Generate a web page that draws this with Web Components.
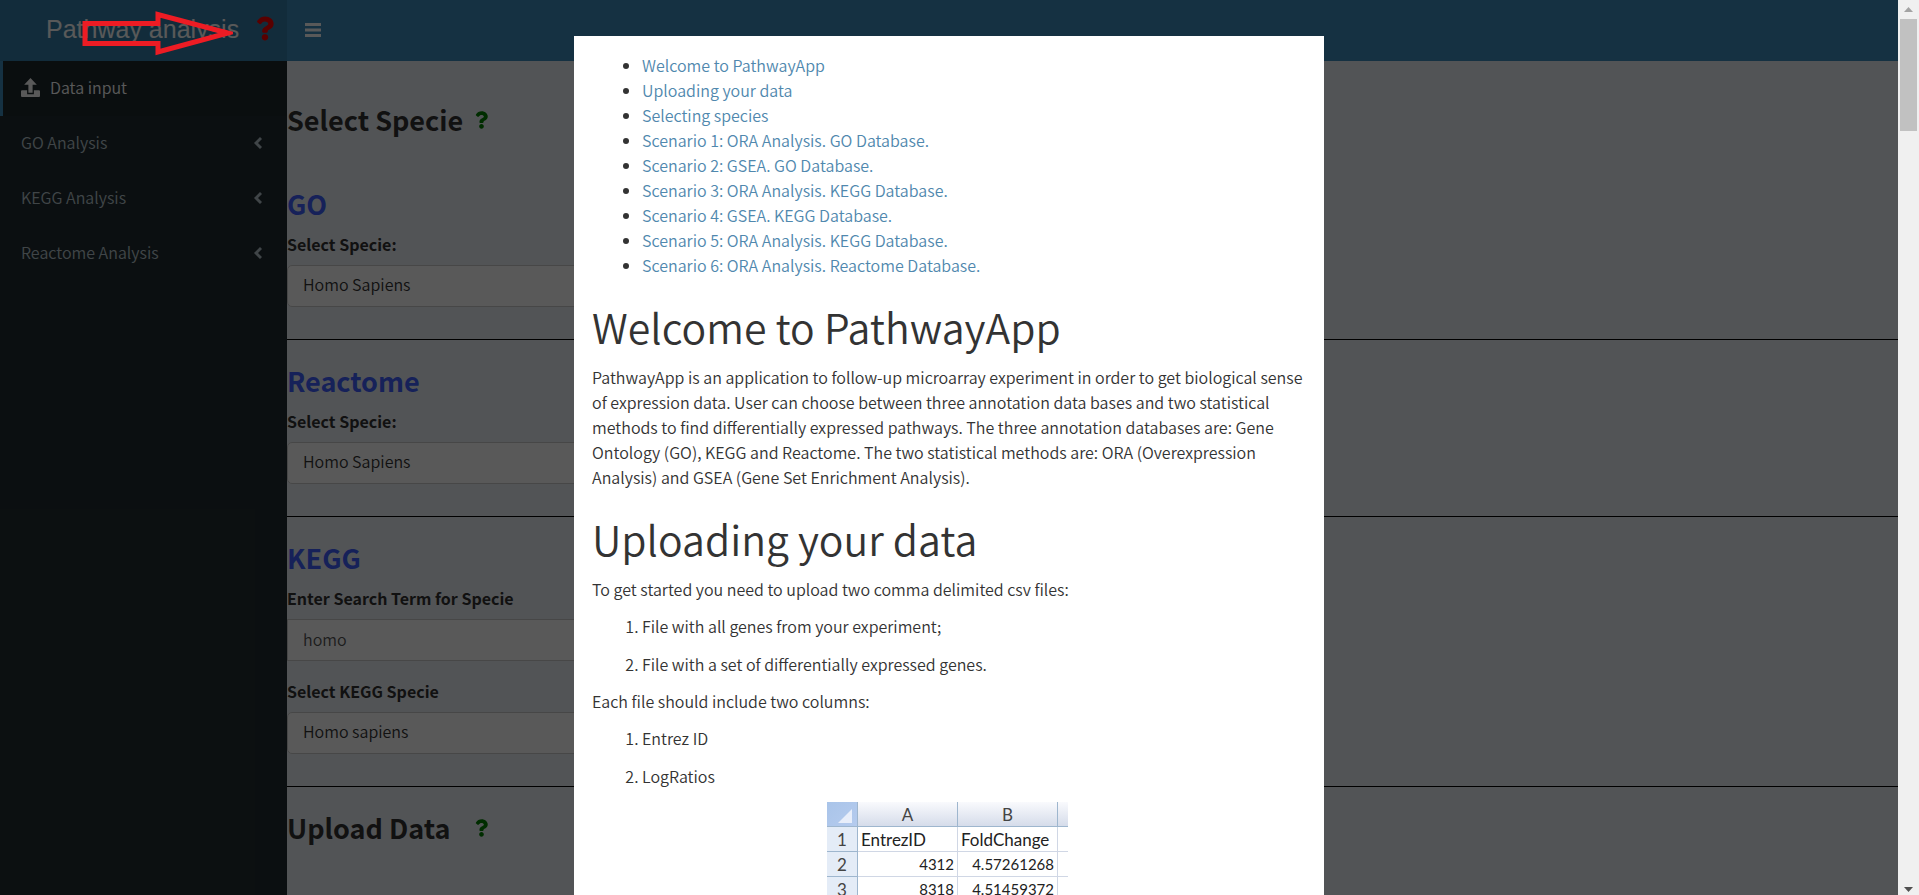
<!DOCTYPE html>
<html lang="en">
<head>
<meta charset="utf-8">
<title>Pathway analysis</title>
<style>
html, body { margin: 0; height: 100%; overflow: hidden; }
body { font: 350 16px/25px "Noto Sans CJK SC", "Noto Sans", sans-serif; color: #333; }
</style>
</head>
<body>
<pathway-app></pathway-app>

<script>
const define = (name, html, setup) => customElements.define(name, class extends HTMLElement {
  connectedCallback() {
    if (this.shadowRoot) return;
    this.attachShadow({ mode: "open" }).innerHTML = html;
    if (setup) setup(this, this.shadowRoot);
  }
});

const shapes = {
  question: ["0 0 384 512", "M202 0C122.500 0 69.600 32.800 28.100 91.300c-8 11.300-5.600 26.800 5.200 35l43.100 32.700c10.600 8 25.700 6 33.900-4.300 25-31.600 43.600-49.700 82.700-49.700 30.800 0 68.800 19.800 68.800 49.600 0 22.600-18.600 34.200-49 51.200-35.400 19.900-82.300 44.600-82.300 106.500V320c0 13.300 10.700 24 24 24h72.500c13.300 0 24-10.700 24-24v-5.800c0-42.900 125.400-44.700 125.400-160.800C377 66 286.800 0 202 0zM192 373.500c-38.200 0-69.300 31.100-69.300 69.300S153.800 512 192 512s69.300-31 69.300-69.300-31.100-69.200-69.300-69.200z"],
  bars: ["0 0 16 14", "M0 0h16v3H0zM0 5.500h16v3H0zM0 11h16v3H0z"],
  left: ["0 0 8 12", "M6 0 8 2 4 6l4 4-2 2L0 6z"],
  upload: ["0 0 18 18", "M9 0l6 6.500h-4V14H7V6.500H3zM1 11.500h4.800v3.800h6.400v-3.800H17q1 0 1 1v4.500q0 1-1 1H1q-1 0-1-1v-4.500q0-1 1-1z"]
};
define("app-icon", `<style>:host{display:block;flex:none}svg{display:block;width:100%;height:100%;fill:currentColor}</style><svg aria-hidden="true"><path/></svg>`, (el, root) => {
  const [box, d] = shapes[el.getAttribute("name")];
  root.querySelector("svg").setAttribute("viewBox", box);
  root.querySelector("path").setAttribute("d", d);
});

define("app-header", `<style>
:host{display:flex;height:61px;background:#3c8dbc;color:#fff}
.brand{box-sizing:border-box;width:287px;display:flex;align-items:center;justify-content:space-between;padding:0 13px 4px 46px;background:#367fa9;color:#fff;font:25px/30px "Liberation Sans",Arial,sans-serif;text-decoration:none}
.brand app-icon{width:18px;height:25px;color:#f00}
button{border:0;background:none;color:inherit;padding:0 18px 2px}
button app-icon{width:16px;height:14px}
</style><a class="brand" href="#help">Pathway analysis<app-icon name="question"></app-icon></a><button aria-label="Toggle navigation"><app-icon name="bars"></app-icon></button>`);

define("nav-item", `<style>
:host{display:block}
a{display:flex;align-items:center;gap:10px;height:55px;box-sizing:border-box;padding:0 25px 2px 18px;border-left:3px solid transparent;color:#b8c7ce;text-decoration:none}
:host([active]) a{background:#1e282c;border-color:#3c8dbc;color:#fff}
.up{width:19px;height:19px}.more{width:8px;height:12px;margin-left:auto}
:host([active]) .more,:host(:not([active])) .up{display:none}
</style><a href="#"><app-icon class="up" name="upload"></app-icon><slot></slot><app-icon class="more" name="left"></app-icon></a>`);

define("app-sidebar", `<style>:host{display:block;width:287px;flex:none;background:#222d32}</style>
<nav><nav-item active>Data input</nav-item><nav-item>GO Analysis</nav-item><nav-item>KEGG Analysis</nav-item><nav-item>Reactome Analysis</nav-item></nav>`);

define("section-title", `<style>
:host{display:block}
h2{margin:0;display:flex;align-items:center;justify-content:space-between;width:201px;font-size:27px;line-height:33px;font-weight:700;color:#333;white-space:nowrap}
:host([blue]) h2{color:#4060ff}
app-icon{width:13px;height:18px;color:#008000}
:host([blue]) app-icon{display:none}
</style><h2><slot></slot><app-icon name="question"></app-icon></h2>`);

define("form-field", `<style>
:host{display:block;width:375px;max-width:100%}
label{display:block;margin-bottom:8px;font-weight:700;color:#333}
select,input{display:block;box-sizing:border-box;width:100%;height:42px;padding:0 15px 3px;border:1px solid #ccc;border-radius:5px;background:#fff;color:#333;font:inherit;appearance:none}
input{border-radius:0;color:#555}
</style><label for="control"></label>`, (el, root) => {
  root.querySelector("label").textContent = el.getAttribute("label");
  const value = el.getAttribute("value");
  const control = document.createElement(el.hasAttribute("text") ? "input" : "select");
  control.id = "control";
  if (el.hasAttribute("text")) control.value = value; else control.add(new Option(value));
  root.append(control);
});

define("specie-page", `<style>
:host{display:block;flex:1;padding-top:42px;background:#ecf0f5;overflow:hidden}
.first{margin-bottom:51px}
section section-title{margin-bottom:12px}
form-field+form-field{margin-top:18px}
hr{height:1px;border:0;background:#000;margin:32px 0 24px}
</style>
<section-title class="first">Select Specie</section-title>
<section><section-title blue>GO</section-title><form-field label="Select Specie:" value="Homo Sapiens"></form-field></section><hr>
<section><section-title blue>Reactome</section-title><form-field label="Select Specie:" value="Homo Sapiens"></form-field></section><hr>
<section><section-title blue>KEGG</section-title><form-field text label="Enter Search Term for Specie" value="homo"></form-field><form-field label="Select KEGG Specie" value="Homo sapiens"></form-field></section><hr>
<section-title>Upload Data</section-title>`);

define("help-modal", `<style>
:host{position:absolute;inset:0;display:flex;justify-content:center;align-items:flex-start;padding-top:36px;overflow:hidden;background:rgba(0,0,0,.65)}
article{box-sizing:border-box;width:750px;max-width:100%;min-height:100%;padding:17px 10px 0 18px;background:#fff;color:#333}
</style><article role="dialog" aria-label="Help"><slot></slot></article>`);

define("sheet-preview", `<style>
:host{display:block;width:241px;margin:13px auto 0 235px;color:#222;font:400 17px/24px Lato,sans-serif}
table{width:100%;table-layout:fixed;border-collapse:separate;border-spacing:0}
th,td{box-sizing:border-box;height:25px;padding:1px 3px 0;line-height:23px;border-right:1px solid #d0d7e5;border-bottom:1px solid #d0d7e5;font-weight:400;text-align:right}
td{font-size:15px}
th{text-align:center;color:#444;border-color:#9eb6ce;background:#e4ecf7}
thead th{background:linear-gradient(#f9fafd,#d5dcea)}
thead th:first-child{padding:0;background:linear-gradient(135deg,#a9c4e9,#b5cbee)}
svg{display:block;width:14px;height:14px;margin:3px 5px 0 auto;fill:#e8eefa}
.names td{text-align:left;font-size:17px}
tr>:last-child{border-right:0}
</style>
<table><colgroup><col style="width:31px"><col style="width:100px"><col style="width:100px"><col></colgroup>
<thead><tr><th aria-label="Select all"><svg viewBox="0 0 14 14"><path d="M14 0v14H0z"/></svg></th><th>A</th><th>B</th><th></th></tr></thead>
<tbody><tr class="names"><th>1</th><td>EntrezID</td><td>FoldChange</td><td></td></tr>
<tr><th>2</th><td>4312</td><td>4.57261268</td><td></td></tr>
<tr><th>3</th><td>8318</td><td>4.51459372</td><td></td></tr></tbody></table>`);

define("pointer-arrow", `<style>:host{position:absolute;left:81px;top:9px;width:152px;height:48px}svg{display:block;fill:none;stroke:#ed1c24;stroke-width:5}</style>
<svg width="152" height="48" viewBox="0 0 152 48" aria-hidden="true"><path d="M4 14.500H77V5.500L147 24 77 43V34.500H4z"/></svg>`);

define("scroll-rail", `<style>
:host{display:flex;flex-direction:column;align-items:center;justify-content:space-between;width:21px;flex:none;background:#f0f0f0}
.top{display:flex;flex-direction:column;align-items:center;gap:7px;padding-top:7px}
.thumb{width:17px;height:112px;background:#c1c1c1}
svg{display:block;width:9px;height:5px;fill:#a3a3a3}
.down{fill:#505050;margin-bottom:3px}
</style><div class="top"><svg viewBox="0 0 9 5"><path d="M0 5 4.500 0 9 5z"/></svg><div class="thumb"></div></div><svg class="down" viewBox="0 0 9 5"><path d="M0 0h9L4.500 5z"/></svg>`);

define("pathway-app", `<style>
:host{display:flex;height:100vh}
.stage{position:relative;flex:1;min-width:0;display:flex;flex-direction:column;overflow:hidden}
.body{flex:1;display:flex;min-height:0}
h1{margin:24px 0 15px;font-size:41px;font-weight:350;line-height:48px}
p{margin:0 0 12px}
ul,ol{margin:0 0 12px;padding:0 0 0 50px}
.contents{margin:0}
ol{display:flex;flex-direction:column;gap:13px}
help-modal a{color:#5088ae;text-decoration:none}
</style>
<div class="stage"><app-header></app-header><div class="body"><app-sidebar></app-sidebar><specie-page></specie-page></div>
<help-modal>
<ul class="contents"><li><a href="#">Welcome to PathwayApp</a></li><li><a href="#">Uploading your data</a></li><li><a href="#">Selecting species</a></li><li><a href="#">Scenario 1: ORA Analysis. GO Database.</a></li><li><a href="#">Scenario 2: GSEA. GO Database.</a></li><li><a href="#">Scenario 3: ORA Analysis. KEGG Database.</a></li><li><a href="#">Scenario 4: GSEA. KEGG Database.</a></li><li><a href="#">Scenario 5: ORA Analysis. KEGG Database.</a></li><li><a href="#">Scenario 6: ORA Analysis. Reactome Database.</a></li></ul>
<h1>Welcome to PathwayApp</h1>
<p>PathwayApp is an application to follow-up microarray experiment in order to get biological sense<br>of expression data. User can choose between three annotation data bases and two statistical<br>methods to find differentially expressed pathways. The three annotation databases are: Gene<br>Ontology (GO), KEGG and Reactome. The two statistical methods are: ORA (Overexpression<br>Analysis) and GSEA (Gene Set Enrichment Analysis).</p>
<h1>Uploading your data</h1>
<p>To get started you need to upload two comma delimited csv files:</p>
<ol><li>File with all genes from your experiment;</li><li>File with a set of differentially expressed genes.</li></ol>
<p>Each file should include two columns:</p>
<ol><li>Entrez ID</li><li>LogRatios</li></ol>
<sheet-preview></sheet-preview>
</help-modal>
<pointer-arrow></pointer-arrow></div><scroll-rail></scroll-rail>`);
</script>
</body>
</html>
